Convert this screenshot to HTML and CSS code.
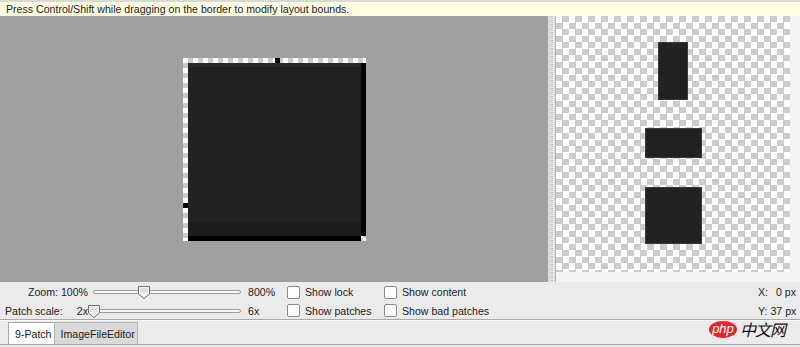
FILE: index.html
```html
<!DOCTYPE html>
<html lang="en">
<head>
  <meta charset="UTF-8" />
  <title>9-Patch</title>
  <link rel="stylesheet" href="styles.css">
</head>
<body>
  <div class="hint">Press Control/Shift while dragging on the border to modify layout bounds.</div>

  <div class="workspace">
    <div class="canvas">
      <div class="patch">
        <div class="edge-top"><span class="mark mark-top"></span></div>
        <div class="edge-left"><span class="mark mark-left"></span></div>
        <div class="patch-fill"></div>
        <div class="pad-right"></div>
        <div class="pad-bottom"></div>
      </div>
    </div>
    <div class="splitter"></div>
    <div class="preview">
      <div class="checker">
        <div class="sample sample-tall"></div>
        <div class="sample sample-wide"></div>
        <div class="sample sample-square"></div>
      </div>
    </div>
  </div>

  <div class="controls">
    <div class="cell label-right">Zoom: 100%</div>
    <div class="cell"><div class="track"><span class="thumb" style="left: 44px"></span></div></div>
    <div class="cell max">800%</div>
    <div class="cell"><span class="box"></span>Show lock</div>
    <div class="cell"><span class="box"></span>Show content</div>
    <div class="cell"></div>
    <div class="cell coords"><span>X:</span><span class="val">0 px</span></div>

    <div class="cell label-split"><span>Patch scale:</span><span>2x</span></div>
    <div class="cell"><div class="track"><span class="thumb" style="left: -6px"></span></div></div>
    <div class="cell max">6x</div>
    <div class="cell"><span class="box"></span>Show patches</div>
    <div class="cell"><span class="box"></span>Show bad patches</div>
    <div class="cell"></div>
    <div class="cell coords"><span>Y:</span><span class="val">37 px</span></div>
  </div>

  <div class="tabs">
    <div class="tab active">9-Patch</div>
    <div class="tab">ImageFileEditor</div>
  </div>

  <div class="watermark"><span class="php">php</span><span class="cn">中文网</span></div>
</body>
</html>
```

FILE: styles.css
```css
body {
  margin: 0;
  width: 800px;
  height: 347px;
  overflow: hidden;
  background: #ebebeb;
  font-family: "Liberation Sans", Arial, sans-serif;
  font-size: 10.6px;
  color: #222;
  position: relative;
}
.hint {
  border-top: 2px solid #d9d9d4;
  height: 14px;
  line-height: 14px;
  background: #fffde3;
  padding-left: 6px;
}
.workspace {
  display: flex;
  height: 266px;
}
.canvas {
  width: 548px;
  background: #a0a0a0;
  display: flex;
  align-items: center;
  justify-content: center;
}
.patch {
  display: grid;
  grid-template-columns: 5px 173px 5px;
  grid-template-rows: 5px 173px 5px;
  background: repeating-conic-gradient(#cbcbcb 0 25%, #ffffff 0 50%) 0 0 / 10px 10px;
  margin-left: 1px;
}
.edge-top {
  grid-area: 1 / 2;
}
.edge-left {
  grid-area: 2 / 1;
}
.mark {
  display: block;
  width: 5px;
  height: 5px;
  background: #000;
}
.mark-top {
  margin-left: 87px;
}
.mark-left {
  margin-top: 140px;
}
.patch-fill {
  grid-area: 2 / 2;
  background: linear-gradient(#2a2a2a 0 4px, #222 4px 159px, #1c1c1c 159px);
}
.pad-right {
  grid-area: 2 / 3;
  background: #000;
}
.pad-bottom {
  grid-area: 3 / 2;
  background: #000;
}
.splitter {
  width: 8px;
  box-sizing: border-box;
  background: #e4e4e4;
  border-left: 3px solid #dcdcdc;
  border-right: 1px solid #aab3c6;
}
.splitter::after {
  content: "";
  display: block;
  width: 2px;
  height: 100%;
  background: repeating-linear-gradient(#b8b8b8 0 1px, #f4f4f4 1px 2px);
}
.preview {
  width: 244px;
  box-sizing: border-box;
  padding: 0 10px 10px 0;
  background: #f3f3f3;
}
.checker {
  height: 100%;
  background: repeating-conic-gradient(#cccccc 0 25%, #ffffff 0 50%) 0 0 / 13px 13px;
  display: flex;
  flex-direction: column;
  align-items: center;
  padding-top: 26px;
  gap: 28px;
  box-sizing: border-box;
}
.sample {
  background: #222;
  box-shadow: 0 0 0 1px #3a3a3a inset;
}
.sample-tall {
  width: 30px;
  height: 58px;
}
.sample-wide {
  width: 57px;
  height: 30px;
}
.sample-square {
  width: 57px;
  height: 57px;
  margin-top: 1px;
}
.controls {
  height: 37px;
  box-sizing: border-box;
  padding-top: 1px;
  display: grid;
  grid-template-columns: 89px 156px 42px 97px 150px 1fr 42px;
  grid-template-rows: 18px 19px;
}
.cell {
  display: flex;
  align-items: center;
  white-space: nowrap;
}
.label-right {
  justify-content: flex-end;
  padding-right: 1px;
}
.label-split {
  justify-content: space-between;
  padding: 0 1px 0 5px;
}
.track {
  position: relative;
  width: 148px;
  height: 4px;
  margin-left: 4px;
  border: 1px solid #9c9c9c;
  border-radius: 2px;
  background: #f6f6f6;
  box-sizing: border-box;
}
.thumb {
  position: absolute;
  top: -5px;
  width: 12px;
  height: 13px;
  background: url("data:image/svg+xml;utf8,<svg xmlns='http://www.w3.org/2000/svg' width='12' height='13'><path d='M0.5 0.5H11.5V8L6 12.5L0.5 8Z' fill='%23f2f2f2' stroke='%23707070'/><path d='M2.5 3h1M5.5 3h1M8.5 3h1M4 4.5h1M7 4.5h1M2.5 6h1M5.5 6h1M8.5 6h1' stroke='%23a8a8a8'/></svg>") no-repeat;
}
.max {
  padding-left: 3px;
}
.box {
  width: 13px;
  height: 13px;
  box-sizing: border-box;
  border: 1px solid #8a8a8a;
  border-radius: 2px;
  background: #fff;
  margin-right: 5px;
}
.coords {
  justify-content: space-between;
  padding-right: 4px;
  gap: 3px;
}
.tabs {
  display: flex;
  border-top: 1px solid #a9a9a9;
  border-bottom: 1px solid #a9a9a9;
  box-shadow: inset 0 1px #fafafa;
  padding: 2px 0 0 8px;
  height: 22px;
}
.tab {
  display: flex;
  align-items: center;
  padding: 0 2px 0 6px;
  background: #d9d9d9;
  border: 1px solid #b3b3b3;
  border-bottom: none;
}
.tab.active {
  background: #fff;
  border-color: #a9a9a9;
  border-right: none;
  padding: 0 2px 0 6px;
}
.watermark {
  position: absolute;
  left: 709px;
  top: 317px;
  display: flex;
  align-items: center;
  gap: 3px;
}
.php {
  display: inline-block;
  width: 28px;
  height: 17px;
  line-height: 15px;
  border-radius: 50%;
  background: #e3262b;
  color: #fff;
  font-style: italic;
  font-size: 13px;
  text-align: center;
}
.cn {
  font-family: "Noto Sans CJK SC", sans-serif;
  font-size: 16px;
  font-style: italic;
  color: #111;
  letter-spacing: -1px;
}
```
